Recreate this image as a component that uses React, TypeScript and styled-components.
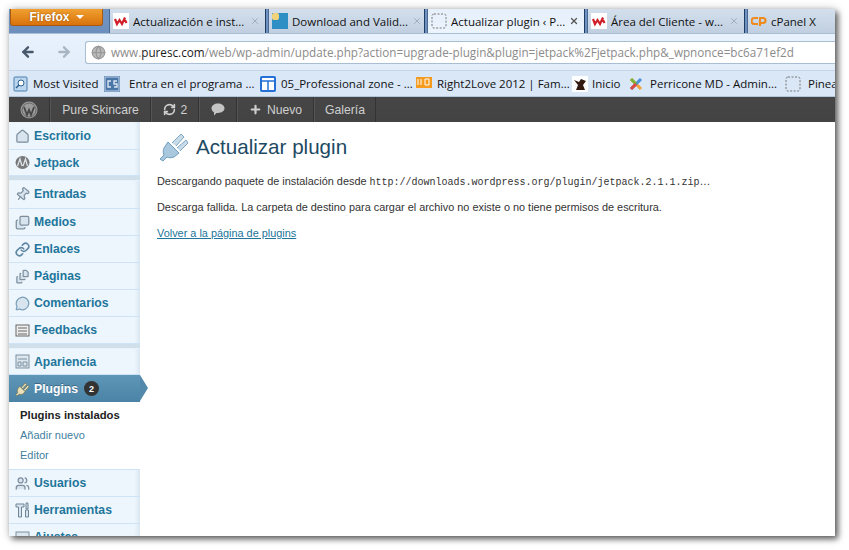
import styled, { createGlobalStyle } from "styled-components";
import {
    ArrowLeft,
    ArrowRight,
    FileStack,
    Globe,
    House,
    Images,
    Link,
    MessageCircle,
    Pin,
    Plus,
    RefreshCw,
    Users,
    X,
} from "lucide-react";

const GlobalStyle = createGlobalStyle`
    html, body {
        margin: 0;
        padding: 0;
        background: #fff;
    }
    body {
        font-family: "Liberation Sans", Arial, sans-serif;
        width: 849px;
        height: 550px;
        overflow: hidden;
    }
`;

const chromeFont = `"Open Sans", "Liberation Sans", Arial, sans-serif`;

const Page = styled.div`
    width: 849px;
    height: 550px;
    padding: 9px 14px 14px 9px;
    box-sizing: border-box;
`;

const Window = styled.div`
    width: 826px;
    height: 527px;
    overflow: hidden;
    display: flex;
    flex-direction: column;
    background: #fff;
    box-shadow: 3px 3px 6px rgba(0, 0, 0, 0.6), 0 0 9px rgba(0, 0, 0, 0.2);
`;

const TabStrip = styled.div`
    height: 24px;
    flex: none;
    display: flex;
    background: linear-gradient(#6f94c4, #6d8fbd);
`;

const FirefoxButton = styled.div`
    width: 93px;
    height: 17px;
    margin: 0 6px 0 1px;
    flex: none;
    box-sizing: border-box;
    border: 1px solid #a95a10;
    border-top: none;
    border-radius: 0 0 3px 3px;
    background: linear-gradient(#f0a030, #e58a1e 50%, #d9710d);
    color: #fff;
    font: bold 12px "Liberation Sans", Arial, sans-serif;
    display: flex;
    align-items: center;
    justify-content: center;
    gap: 6px;
    text-shadow: 0 0 2px rgba(120, 60, 0, 0.8);
`;

const Caret = styled.span`
    width: 0;
    height: 0;
    border-left: 4px solid transparent;
    border-right: 4px solid transparent;
    border-top: 4px solid #fff;
`;

const Tab = styled.div<{ $width: number; $active?: boolean; $gap?: number }>`
    width: ${(props) => props.$width}px;
    margin-right: ${(props) => props.$gap ?? 2}px;
    flex: none;
    box-sizing: border-box;
    display: flex;
    align-items: center;
    gap: 4px;
    padding: 0 5px 0 3px;
    font: 11.5px ${chromeFont};
    color: #111;
    white-space: nowrap;
    overflow: hidden;
    background: ${(props) =>
        props.$active
            ? "linear-gradient(#e6f0fb, #ecf4fd)"
            : "linear-gradient(#d3dfec, #c0cfe0)"};
    border-right: 1px solid #1f3c63;
    border-left: 1px solid #4a6a94;
`;

const TabTitle = styled.span`
    flex: 1;
`;

const TabClose = styled(X)<{ $dark?: boolean }>`
    flex: none;
    color: ${(props) => (props.$dark ? "#555" : "#9aa6b4")};
`;

const Favicon = styled.span`
    width: 16px;
    height: 16px;
    flex: none;
    display: flex;
    align-items: center;
    justify-content: center;
`;

const NavBar = styled.div`
    height: 37px;
    flex: none;
    display: flex;
    align-items: center;
    box-sizing: border-box;
    padding-left: 11px;
    background: linear-gradient(#e8f2fd, #e2edf9);
    border-top: 1px solid #a9bdd3;
`;

const NavButton = styled.span<{ $disabled?: boolean; $width: number }>`
    width: ${(props) => props.$width}px;
    flex: none;
    display: flex;
    color: ${(props) => (props.$disabled ? "#a9b5c2" : "#47586b")};
`;

const UrlField = styled.div`
    flex: 1;
    height: 23px;
    margin-left: 1px;
    box-sizing: border-box;
    display: flex;
    align-items: center;
    gap: 5px;
    padding-left: 5px;
    background: #fff;
    border: 1px solid #a9bdd3;
    border-right: none;
    border-radius: 3px 0 0 3px;
    font: 11.7px ${chromeFont};
    color: #8b8b8b;
    white-space: nowrap;
    overflow: hidden;
`;

const UrlHost = styled.span`
    color: #1a1a1a;
`;

const Bookmarks = styled.div`
    height: 27px;
    flex: none;
    box-sizing: border-box;
    display: flex;
    align-items: center;
    padding-left: 3px;
    background: #d9e7f7;
    border-top: 1px solid #c6d6e8;
    border-bottom: 1px solid #b3c5d9;
    font: 11.5px ${chromeFont};
    color: #111;
    white-space: nowrap;
    overflow: hidden;
`;

const Bookmark = styled.div<{ $width: number; $gap?: number }>`
    width: ${(props) => props.$width}px;
    flex: none;
    display: flex;
    align-items: center;
    gap: ${(props) => props.$gap ?? 5}px;
`;

const AdminBar = styled.div`
    height: 25px;
    flex: none;
    display: flex;
    background: linear-gradient(#464646, #434343);
    color: #cfcfcf;
    font-size: 12.2px;
`;

const AdminItem = styled.div<{ $width: number }>`
    width: ${(props) => props.$width}px;
    flex: none;
    box-sizing: border-box;
    display: flex;
    align-items: center;
    justify-content: center;
    gap: 5px;
    border-right: 1px solid #333;
    border-left: 1px solid #555;
    &:first-child {
        border-left: none;
    }
`;

const Body = styled.div`
    flex: 1;
    min-height: 0;
    display: flex;
`;

const Sidebar = styled.nav`
    width: 131px;
    flex: none;
    padding-top: 1px;
    background: #eef6fd;
    box-shadow: inset -5px 0 5px -3px #d4e2ef;
`;

const MenuRow = styled.div<{ $height?: number; $bottom?: number }>`
    height: ${(props) => props.$height ?? 27}px;
    box-sizing: border-box;
    display: flex;
    align-items: center;
    padding: 0 0 ${(props) => props.$bottom ?? 0}px 6px;
    gap: 4px;
    border-bottom: 1px solid #cfe3f6;
    font: bold 12.2px "Liberation Sans", Arial, sans-serif;
    color: #21759b;
`;

const MenuIcon = styled.span`
    width: 15px;
    height: 16px;
    flex: none;
    display: flex;
    align-items: center;
    justify-content: center;
    color: #7d8f9f;
`;

const Separator = styled.div`
    height: 5px;
    background: #cfe0ea;
    border-bottom: 1px solid #e8f2fa;
    box-sizing: border-box;
`;

const ActiveRow = styled.div`
    position: relative;
    height: 27px;
    box-sizing: border-box;
    display: flex;
    align-items: center;
    padding-left: 6px;
    gap: 4px;
    background: linear-gradient(#5f96b8, #4a83a6);
    font: bold 12.2px "Liberation Sans", Arial, sans-serif;
    color: #fff;
    text-shadow: 0 -1px 0 rgba(0, 0, 0, 0.3);
    &::after {
        content: "";
        position: absolute;
        left: 100%;
        top: 0;
        border-top: 13.5px solid transparent;
        border-bottom: 13.5px solid transparent;
        border-left: 8px solid #5389ab;
    }
`;

const Badge = styled.span`
    width: 15px;
    height: 15px;
    margin-left: 2px;
    border-radius: 50%;
    background: #333;
    color: #fff;
    font-size: 9px;
    display: flex;
    align-items: center;
    justify-content: center;
    text-shadow: none;
`;

const SubMenu = styled.div`
    height: 68px;
    box-sizing: border-box;
    padding: 3px 0 0 11px;
    background: #fff;
    border-bottom: 1px solid #cfe3f6;
`;

const SubItem = styled.div<{ $current?: boolean }>`
    height: 20px;
    line-height: 20px;
    font-size: ${(props) => (props.$current ? 11.3 : 11)}px;
    font-weight: ${(props) => (props.$current ? "bold" : "normal")};
    color: ${(props) => (props.$current ? "#222" : "#3f7fa0")};
`;

const Content = styled.main`
    flex: 1;
    padding: 8px 0 0 17px;
    font-size: 10.9px;
    color: #333;
`;

const Heading = styled.div`
    display: flex;
    align-items: center;
    gap: 6px;
    height: 34px;
    margin-bottom: 11px;
    margin-left: 1px;
`;

const Title = styled.h1`
    margin: 0;
    font: normal 20.6px "Liberation Sans", Arial, sans-serif;
    color: #1d4a63;
`;

const Paragraph = styled.p`
    margin: 0 0 14px;
    height: 12px;
    line-height: 12px;
    white-space: nowrap;
`;

const Mono = styled.code`
    font: 10px "Liberation Mono", monospace;
`;

const BackLink = styled.a`
    color: #21759b;
    text-decoration: underline;
`;

function RedW() {
    return (
        <Favicon>
            <svg width="16" height="16" viewBox="0 0 16 16">
                <rect width="16" height="16" fill="#fff" />
                <path d="M2 6 L4 11 L6.5 7 L9 11 L12 4.5 M12 7 L13.5 10" fill="none" stroke="#d1202a" strokeWidth="2.2" />
            </svg>
        </Favicon>
    );
}

function DashedIcon() {
    return (
        <Favicon>
            <svg width="16" height="16" viewBox="0 0 16 16">
                <rect x="1" y="1" width="14" height="14" rx="2" fill="none" stroke="#777" strokeDasharray="2 1.5" />
            </svg>
        </Favicon>
    );
}

function PluginArt() {
    return (
        <svg width="32" height="32" viewBox="0 0 32 32">
            <path d="M10 11 L21 22 L16 26 C13 27 11 27 9 26 L5 30 L2 28 L6 24 C5 21 5 19 6 17 Z" fill="#a9c8de" stroke="#6f9dbd" />
            <path d="M14 12 L23 3 L26 6 L18 15 M19 17 L28 9 L30 12 L22 20" fill="#c8dbe9" stroke="#7fa6c2" />
        </svg>
    );
}

const iconFill = "#d8e5ef";

const menuTop = [
    { label: "Escritorio", icon: <House size={15} fill={iconFill} /> },
    {
        label: "Jetpack",
        icon: (
            <svg width="15" height="15" viewBox="0 0 15 15">
                <ellipse cx="7.5" cy="7.5" rx="7" ry="6.5" fill="#77797b" />
                <path d="M2.5 11 L5 4 L7 11 M8 11 L10.5 4 L12.5 11" fill="none" stroke="#dfe4e8" strokeWidth="1.3" />
            </svg>
        ),
    },
];

const menuContent = [
    { label: "Entradas", icon: <Pin size={15} fill={iconFill} style={{ transform: "rotate(40deg)" }} />, height: 28, bottom: 1 },
    { label: "Medios", icon: <Images size={15} fill={iconFill} /> },
    { label: "Enlaces", icon: <Link size={15} strokeWidth={2.6} color="#5f86a3" /> },
    { label: "Páginas", icon: <FileStack size={15} fill={iconFill} /> },
    { label: "Comentarios", icon: <MessageCircle size={15} fill={iconFill} color="#7ba0bb" /> },
    {
        label: "Feedbacks",
        icon: (
            <svg width="15" height="15" viewBox="0 0 15 15">
                <rect x="1" y="2" width="13" height="11" fill="#eee" stroke="#666" />
                <path d="M3 5h9M3 8h9M3 11h9" stroke="#666" />
            </svg>
        ),
    },
];

export default function App() {
    return (
        <Page>
            <GlobalStyle />
            <Window>
                <TabStrip>
                    <FirefoxButton>
                        Firefox <Caret />
                    </FirefoxButton>
                    <Tab $width={157}>
                        <RedW />
                        <TabTitle>Actualización e inst...</TabTitle>
                        <TabClose size={10} />
                    </Tab>
                    <Tab $width={157}>
                        <Favicon>
                            <svg width="16" height="16" viewBox="0 0 16 16">
                                <rect width="16" height="16" fill="#2d8fc4" />
                                <rect width="7" height="7" rx="2" fill="#f2d37a" />
                            </svg>
                        </Favicon>
                        <TabTitle>Download and Valid...</TabTitle>
                        <TabClose size={10} />
                    </Tab>
                    <Tab $width={158} $active>
                        <DashedIcon />
                        <TabTitle>Actualizar plugin ‹ P...</TabTitle>
                        <TabClose size={10} $dark strokeWidth={3} />
                    </Tab>
                    <Tab $width={158}>
                        <RedW />
                        <TabTitle>Área del Cliente - w...</TabTitle>
                        <TabClose size={10} />
                    </Tab>
                    <Tab $width={92} $gap={0}>
                        <Favicon>
                            <svg width="16" height="16" viewBox="0 0 16 16">
                                <path d="M7 5H3.5a3 3 0 0 0 0 6H7M9 13V5h3a2.5 2.5 0 0 1 0 5H9" fill="none" stroke="#f08a1d" strokeWidth="2.2" />
                            </svg>
                        </Favicon>
                        <TabTitle>cPanel X</TabTitle>
                    </Tab>
                </TabStrip>
                <NavBar>
                    <NavButton $width={36}>
                        <ArrowLeft size={16} strokeWidth={3.5} />
                    </NavButton>
                    <NavButton $width={28} $disabled>
                        <ArrowRight size={16} strokeWidth={3.5} />
                    </NavButton>
                    <UrlField>
                        <Globe size={15} color="#999" fill="#bbb" />
                        <span>
                            www.<UrlHost>puresc.com</UrlHost>
                            /web/wp-admin/update.php?action=upgrade-plugin&amp;plugin=jetpack%2Fjetpack.php&amp;_wpnonce=bc6a71ef2d
                        </span>
                    </UrlField>
                </NavBar>
                <Bookmarks>
                    <Bookmark $width={92}>
                        <Favicon>
                            <svg width="15" height="16" viewBox="0 0 15 16">
                                <rect x="1" y="1" width="13" height="14" rx="1" fill="#bcd6ee" stroke="#4a7eb0" />
                                <circle cx="8" cy="7" r="3" fill="#fff" stroke="#2b5f92" />
                                <path d="M6 9 L3 12" stroke="#2b5f92" strokeWidth="1.5" />
                            </svg>
                        </Favicon>
                        Most Visited
                    </Bookmark>
                    <Bookmark $width={156} $gap={9}>
                        <Favicon>
                            <svg width="16" height="16" viewBox="0 0 16 16">
                                <rect width="16" height="16" fill="#4b76a8" />
                                <rect x="1" y="1" width="14" height="14" fill="none" stroke="#c5d6e8" />
                                <path d="M7 5H4v6h3M13 5h-3v3h3v3h-3" fill="none" stroke="#dbe6f1" strokeWidth="1.4" />
                            </svg>
                        </Favicon>
                        Entra en el programa ...
                    </Bookmark>
                    <Bookmark $width={156}>
                        <Favicon>
                            <svg width="16" height="16" viewBox="0 0 16 16">
                                <rect x="1" y="1" width="14" height="14" rx="1" fill="#fff" stroke="#2470d6" strokeWidth="2" />
                                <path d="M1 5h14M8 5v10" stroke="#2470d6" strokeWidth="1.5" />
                            </svg>
                        </Favicon>
                        05_Professional zone - ...
                    </Bookmark>
                    <Bookmark $width={156}>
                        <Favicon>
                            <svg width="16" height="16" viewBox="0 0 16 16">
                                <rect y="1" width="16" height="11" fill="#f59b1f" />
                                <path d="M2 3v6M5 3v6M9 3h4v6H9z" stroke="#fff" fill="none" />
                            </svg>
                        </Favicon>
                        Right2Love 2012 | Fam...
                    </Bookmark>
                    <Bookmark $width={56} $gap={4}>
                        <Favicon>
                            <svg width="16" height="16" viewBox="0 0 16 16">
                                <rect width="16" height="16" fill="#fff" />
                                <path d="M2 4 L7 6 L9 3 L14 5 L11 9 L13 14 H4 L6 9 Z" fill="#331a10" />
                            </svg>
                        </Favicon>
                        Inicio
                    </Bookmark>
                    <Bookmark $width={157} $gap={6}>
                        <Favicon>
                            <svg width="16" height="16" viewBox="0 0 16 16">
                                <path d="M3 3 L13 13" stroke="#f2a03a" strokeWidth="3" />
                                <path d="M13 3 L3 13" stroke="#4a90d9" strokeWidth="3" />
                                <path d="M3 3 L8 8" stroke="#7bb43c" strokeWidth="3" />
                                <path d="M3 13 L8 8" stroke="#e0483e" strokeWidth="3" />
                            </svg>
                        </Favicon>
                        Perricone MD - Admin...
                    </Bookmark>
                    <Bookmark $width={60} $gap={7}>
                        <DashedIcon />
                        Pinea
                    </Bookmark>
                </Bookmarks>
                <AdminBar>
                    <AdminItem $width={41}>
                        <svg width="18" height="18" viewBox="0 0 18 18">
                            <circle cx="9" cy="9" r="8.5" fill="#9b9b9b" />
                            <circle cx="9" cy="9" r="7" fill="none" stroke="#464646" strokeWidth="0.6" />
                            <path d="M4 6 L7 14 L9 9 L11 14 L14 6" fill="none" stroke="#464646" strokeWidth="1.8" />
                        </svg>
                    </AdminItem>
                    <AdminItem $width={101}>Pure Skincare</AdminItem>
                    <AdminItem $width={48}>
                        <RefreshCw size={13} strokeWidth={3} />2
                    </AdminItem>
                    <AdminItem $width={38}>
                        <svg width="14" height="13" viewBox="0 0 14 13">
                            <path d="M7 0.5C10.6 0.5 13.5 2.6 13.5 5.3S10.6 10 7 10C6.5 10 6 10 5.5 9.9L3 12.5V9.2C1.4 8.3.5 6.9.5 5.3.5 2.6 3.4.5 7 .5Z" fill="#c4c4c4" />
                        </svg>
                    </AdminItem>
                    <AdminItem $width={77}>
                        <Plus size={13} strokeWidth={4} />
                        Nuevo
                    </AdminItem>
                    <AdminItem $width={62}>Galería</AdminItem>
                </AdminBar>
                <Body>
                    <Sidebar>
                        {menuTop.map((item, index) => (
                            <MenuRow key={item.label} $height={index === 1 ? 26 : 27}>
                                <MenuIcon>{item.icon}</MenuIcon>
                                {item.label}
                            </MenuRow>
                        ))}
                        <Separator />
                        {menuContent.map((item) => (
                            <MenuRow key={item.label} $height={item.height} $bottom={item.bottom}>
                                <MenuIcon>{item.icon}</MenuIcon>
                                {item.label}
                            </MenuRow>
                        ))}
                        <Separator />
                        <MenuRow $height={26}>
                            <MenuIcon>
                                <svg width="15" height="15" viewBox="0 0 15 15">
                                    <rect x="1" y="1" width="13" height="13" fill="#dbe6ee" stroke="#7d8f9f" />
                                    <path d="M3 5h9M3 8h3v4H3zM8 8h4v4H8z" fill="none" stroke="#7d8f9f" />
                                </svg>
                            </MenuIcon>
                            Apariencia
                        </MenuRow>
                        <ActiveRow>
                            <MenuIcon>
                                <svg width="16" height="16" viewBox="0 0 16 16">
                                    <path d="M5 5 L11 11 L8 13.5 C6.5 14 5.5 14 4.5 13.5 L2 15.5 L0.8 14.2 L2.8 12 C2.3 11 2.3 9.5 2.8 8 Z" fill="#e9dfb9" stroke="#6b6a45" strokeWidth="0.7" />
                                    <path d="M7 6 L11 1.5 L12.5 3 L8.5 7.5 M9.5 8.5 L13.5 4 L15 5.5 L11 10" fill="#e9dfb9" stroke="#6b6a45" strokeWidth="0.7" />
                                </svg>
                            </MenuIcon>
                            Plugins <Badge>2</Badge>
                        </ActiveRow>
                        <SubMenu>
                            <SubItem $current>Plugins instalados</SubItem>
                            <SubItem>Añadir nuevo</SubItem>
                            <SubItem>Editor</SubItem>
                        </SubMenu>
                        <MenuRow>
                            <MenuIcon>
                                <Users size={15} fill={iconFill} />
                            </MenuIcon>
                            Usuarios
                        </MenuRow>
                        <MenuRow>
                            <MenuIcon>
                                <svg width="15" height="16" viewBox="0 0 15 16">
                                    <path d="M1 2h8v3H6.5v10h-3V5H1z" fill="#d8e5ef" stroke="#6f8496" />
                                    <path d="M11 1h2v6h-2zM10.5 8h3v7h-3z" fill="#d8e5ef" stroke="#6f8496" />
                                </svg>
                            </MenuIcon>
                            Herramientas
                        </MenuRow>
                        <MenuRow>
                            <MenuIcon>
                                <svg width="15" height="15" viewBox="0 0 15 15">
                                    <rect x="1" y="2" width="13" height="12" fill="#dbe6ee" stroke="#7d8f9f" />
                                </svg>
                            </MenuIcon>
                            Ajustes
                        </MenuRow>
                    </Sidebar>
                    <Content>
                        <Heading>
                            <PluginArt />
                            <Title>Actualizar plugin</Title>
                        </Heading>
                        <Paragraph>
                            Descargando paquete de instalación desde{" "}
                            <Mono>http://downloads.wordpress.org/plugin/jetpack.2.1.1.zip</Mono>…
                        </Paragraph>
                        <Paragraph>
                            Descarga fallida. La carpeta de destino para cargar el archivo no existe o no tiene permisos de escritura.
                        </Paragraph>
                        <Paragraph>
                            <BackLink href="#">Volver a la página de plugins</BackLink>
                        </Paragraph>
                    </Content>
                </Body>
            </Window>
        </Page>
    );
}
